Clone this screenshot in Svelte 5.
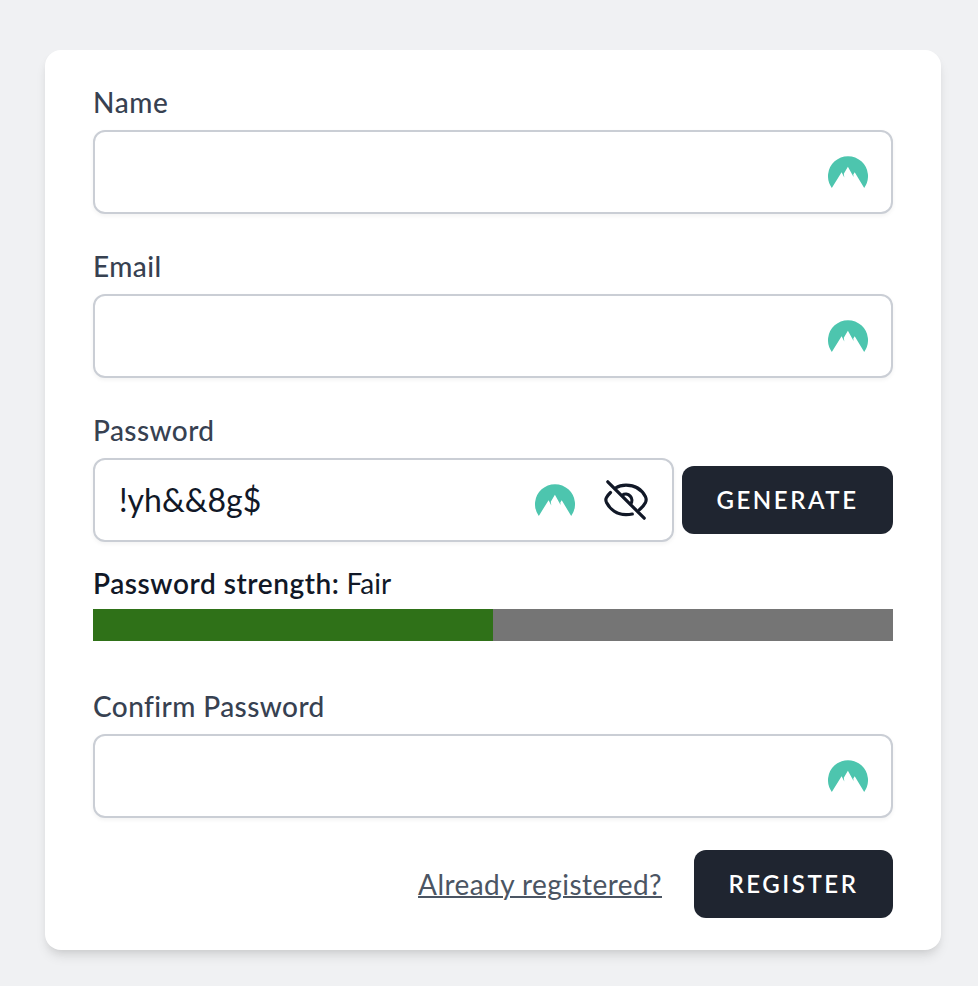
<script>
  let name = $state('');
  let email = $state('');
  let password = $state('!yh&&8g$');
  let confirmation = $state('');
  const strength = { label: 'Fair', percent: 50 };
</script>

{#snippet peak()}
  <svg class="peak" width="40" height="34" viewBox="0 0 40 34" aria-hidden="true">
    <path fill="#4dc5ae" d="M3.8 31.9A20 20 0 1 1 36.2 31.9L26.7 16.3L25.3 18.6L25.6 21.1L19.9 10.8L15.8 17.8L16.3 21.5L13.6 16.2Z" />
  </svg>
{/snippet}

<main>
  <form class="card" onsubmit={(e) => e.preventDefault()}>
    <div class="field">
      <label class="short" for="name">Name</label>
      <div class="control"><input id="name" bind:value={name} />{@render peak()}</div>
    </div>
    <div class="field">
      <label for="email">Email</label>
      <div class="control"><input id="email" bind:value={email} />{@render peak()}</div>
    </div>
    <div class="field">
      <label for="password">Password</label>
      <div class="row">
        <div class="control">
          <input id="password" bind:value={password} />
          {@render peak()}
          <svg class="eye" width="52" height="52" viewBox="0 0 52 52" aria-hidden="true">
            <g fill="none" stroke="#111827" stroke-width="3.2" stroke-linecap="round" stroke-linejoin="round">
              <path d="M7.8 7.8L44.2 44.2" />
              <path d="M15.5 14C18.5 12.1 22.2 11.2 26 11.2C35.5 11.2 42.2 16.5 45.5 22.8Q46.8 25.6 45.5 28.4Q43.3 32.5 39.4 35.7" />
              <path d="M10.5 18.5Q8 20.9 6.5 23.5Q5.2 25.7 6.5 28.4C10 35.2 17 40.6 26 40.6Q29.3 40.6 32.3 40" />
              <path d="M22.2 21.3A6.1 6.1 0 0 1 30.5 30.1" />
            </g>
          </svg>
        </div>
        <button type="button" class="generate">Generate</button>
      </div>
    </div>
    <div class="strength"><strong>Password strength:</strong> <span>{strength.label}</span></div>
    <div class="meter"><div style:width="{strength.percent}%"></div></div>
    <div class="field confirm">
      <label for="confirmation">Confirm Password</label>
      <div class="control"><input id="confirmation" bind:value={confirmation} />{@render peak()}</div>
    </div>
    <footer>
      <a href="#login">Already registered?</a>
      <button class="register">Register</button>
    </footer>
  </form>
</main>

<style>
  :global(body) { background: #f0f1f3; }
  main { box-sizing: border-box; height: 986px; padding: 50px 37px 36px 45px; font-family: Lato, "Liberation Sans", sans-serif; color: #111827; }
  .card { box-sizing: border-box; height: 900px; padding: 32px 48px; background: #fff; border-radius: 16px; box-shadow: 0 8px 12px -2px rgb(0 0 0 / .1), 0 4px 8px -4px rgb(0 0 0 / .1); }
  .field { margin-bottom: 32px; }
  label { display: block; height: 40px; margin-bottom: 8px; font-size: 28px; line-height: 40px; font-weight: 500; letter-spacing: .42px; color: #374151; white-space: nowrap; }
  label.short { letter-spacing: .6px; }
  .control { box-sizing: border-box; display: flex; align-items: center; flex: 1; min-width: 0; height: 84px; padding: 0 23px 0 24px; border: 2px solid #caced5; border-radius: 12px; background: #fff; box-shadow: 0 2px 4px rgb(0 0 0 / .05); }
  input { flex: 1; min-width: 0; height: 60px; margin-top: -2px; padding: 0; border: 0; outline: 0; background: transparent; font: 400 32px/48px Lato, sans-serif; color: #111827; }
  .peak { flex: none; margin-top: 2px; }
  .row { display: flex; align-items: center; gap: 8px; }
  .row .control { padding-right: 20px; }
  .eye { flex: none; margin-left: 25px; }
  button { box-sizing: border-box; flex: none; height: 68px; padding: 0; border: 0; border-radius: 12px; background: #1f2530; color: #fff; font: 600 24px/32px Lato, sans-serif; letter-spacing: 2.55px; text-transform: uppercase; white-space: nowrap; }
  .generate { width: 211px; }
  .register { width: 199px; }
  .strength { height: 40px; margin-top: -11px; font-size: 28px; line-height: 40px; white-space: nowrap; }
  .strength strong { font-weight: 600; letter-spacing: .55px; }
  .meter { height: 32px; margin-top: 6px; background: #757575; }
  .meter div { height: 100%; background: #2f7118; }
  .confirm { margin-top: 45px; }
  footer { display: flex; align-items: center; justify-content: flex-end; gap: 32px; }
  a { font-size: 28px; line-height: 40px; letter-spacing: .44px; color: #4b5563; text-decoration: underline; text-decoration-thickness: 2px; }
</style>
